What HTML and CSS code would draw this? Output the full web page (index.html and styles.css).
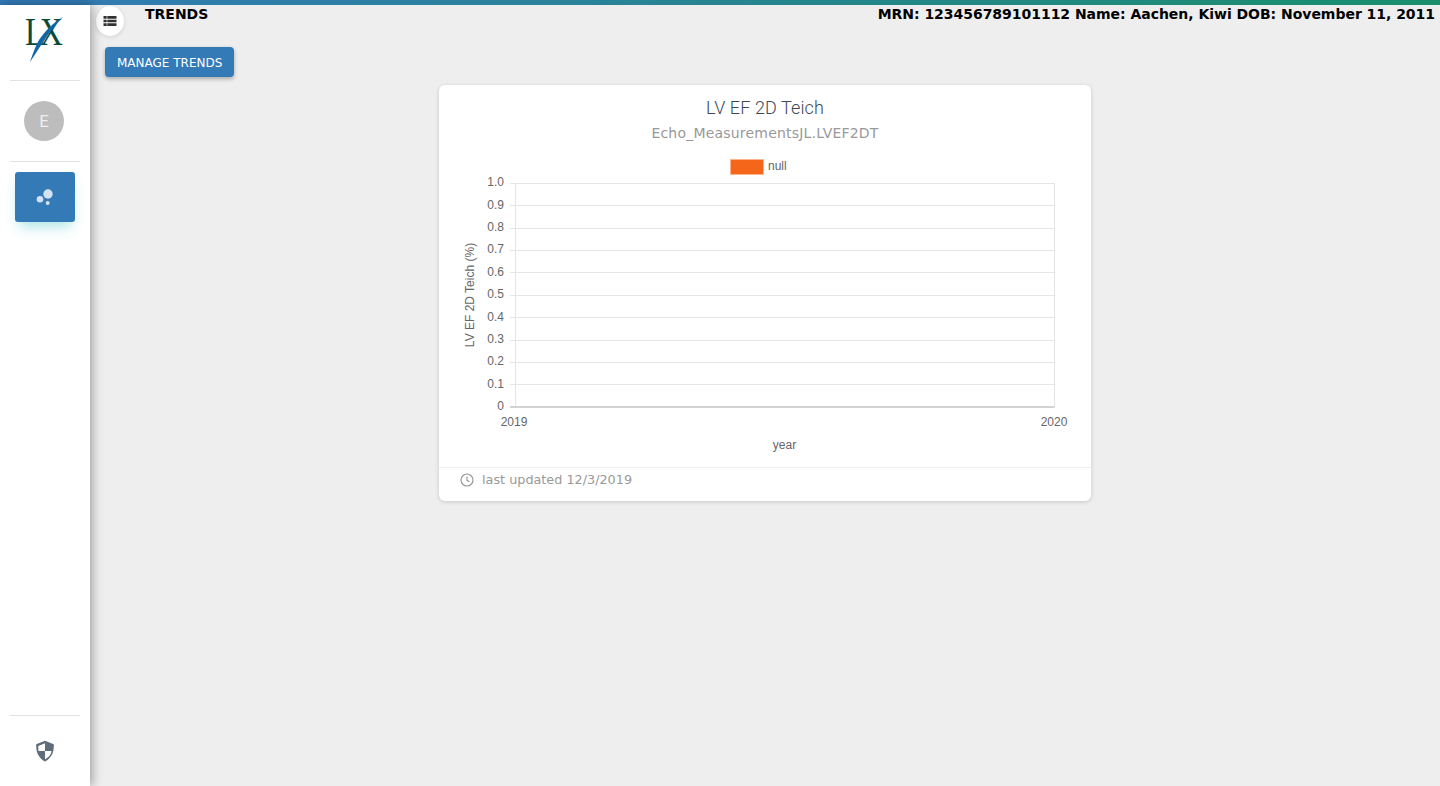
FILE: index.html
```html
<!DOCTYPE html>
<html lang="en">
<head>
    <meta charset="UTF-8">
    <meta name="viewport" content="width=device-width, initial-scale=1.0">
    <title>Trends</title>
    <link rel="stylesheet" href="styles.css">
</head>
<body>
    <div class="top-line"></div>
    <div class="wrapper">
        <aside class="sidebar">
            <div class="logo">
                <svg width="42" height="56" viewBox="0 -8 42 56">
                    <text class="logo-letters" transform="translate(1 29) scale(.8 1)">LX</text>
                    <path class="logo-swoosh" d="M39 1 C29 7 21 15 15 24 C11 31 8 40 6 46 C11 39 15.500 31 20.500 24 C25.500 16 32 8 39 1 Z"/>
                </svg>
            </div>
            <div class="side-section user">
                <div class="avatar">E</div>
            </div>
            <div class="side-section nav">
                <a class="nav-item" href="#">
                    <svg width="18" height="18" viewBox="0 0 18 18">
                        <circle cx="12" cy="6" r="4.700"/>
                        <circle cx="4" cy="11.300" r="3.300"/>
                        <circle cx="11.700" cy="15" r="2"/>
                    </svg>
                </a>
            </div>
            <div class="side-footer">
                <svg width="20" height="22" viewBox="0 0 20 22">
                    <path class="shield" d="M10 .8 L18.800 4.200 C19 11 17.500 17.500 10 21.500 C2.500 17.500 1 11 1.200 4.200 Z"/>
                    <path class="shield-light" d="M10 3.300 V11 H3.500 C3.400 9.500 3.300 7.800 3.300 5.900 Z"/>
                    <path class="shield-light" d="M10 11 H16.500 C16 14.500 14.200 17.200 10 19.200 Z"/>
                </svg>
            </div>
        </aside>

        <main class="main">
            <div class="header">
                <button class="toggle">
                    <svg width="14" height="12" viewBox="0 0 14 12">
                        <path d="M.5 1 H3.700 V3.700 H.5 Z M4.300 1 H13.500 V3.700 H4.300 Z M.5 4.700 H3.700 V7.300 H.5 Z M4.300 4.700 H13.500 V7.300 H4.300 Z M.5 8.300 H3.700 V11 H.5 Z M4.300 8.300 H13.500 V11 H4.300 Z"/>
                    </svg>
                </button>
                <div class="page-title">TRENDS</div>
                <div class="patient">MRN: 123456789101112 Name: Aachen, Kiwi DOB: November 11, 2011</div>
            </div>
            <div class="actions">
                <button class="btn">MANAGE TRENDS</button>
            </div>
            <div class="content">
                <div class="card">
                    <h4 class="card-title">LV EF 2D Teich</h4>
                    <p class="card-category">Echo_MeasurementsJL.LVEF2DT</p>
                    <svg class="chart" width="652" height="315" viewBox="0 0 652 315">
                        <rect class="legend-box" x="291.500" y="7.500" width="33" height="15"/>
                        <text class="chart-text" x="329" y="17.500">null</text>

                        <g class="grid">
                            <path d="M71 31.500 H615.500"/>
                            <path d="M71 53.500 H615.500"/>
                            <path d="M71 76.500 H615.500"/>
                            <path d="M71 98.500 H615.500"/>
                            <path d="M71 120.500 H615.500"/>
                            <path d="M71 143.500 H615.500"/>
                            <path d="M71 165.500 H615.500"/>
                            <path d="M71 188.500 H615.500"/>
                            <path d="M71 210.500 H615.500"/>
                            <path d="M71 232.500 H615.500"/>
                            <path d="M76.500 31 V255"/>
                            <path d="M615.500 31 V255"/>
                        </g>
                        <path class="zero-line" d="M71 255 H615.500"/>

                        <g class="chart-text y-ticks">
                            <text x="65" y="34">1.0</text>
                            <text x="65" y="57">0.9</text>
                            <text x="65" y="79">0.8</text>
                            <text x="65" y="101">0.7</text>
                            <text x="65" y="124">0.6</text>
                            <text x="65" y="146">0.5</text>
                            <text x="65" y="169">0.4</text>
                            <text x="65" y="191">0.3</text>
                            <text x="65" y="213">0.2</text>
                            <text x="65" y="236">0.1</text>
                            <text x="65" y="258">0</text>
                        </g>
                        <text class="chart-text x-tick" x="75" y="274">2019</text>
                        <text class="chart-text x-tick" x="615" y="274">2020</text>
                        <text class="chart-text x-tick" x="345.500" y="297">year</text>
                        <text class="chart-text x-tick" transform="translate(35 143) rotate(-90)">LV EF 2D Teich (%)</text>
                    </svg>
                    <div class="card-footer">
                        <svg width="14" height="14" viewBox="0 0 14 14">
                            <circle class="clock" cx="7" cy="7" r="6"/>
                            <path class="clock" d="M7 3.500 V7.300 L9.500 8.800"/>
                        </svg>
                        <span>last updated 12/3/2019</span>
                    </div>
                </div>
            </div>
        </main>
    </div>
</body>
</html>
```

FILE: styles.css
```css
html, body {
    height: 100%;
}
body {
    margin: 0;
    display: flex;
    flex-direction: column;
    overflow: hidden;
    font-family: "DejaVu Sans", sans-serif;
    background-color: #eeeeee;
}
.top-line {
    height: 5px;
    flex-shrink: 0;
    background: linear-gradient(to right, #337ab7, #1a8f6c);
}
.wrapper {
    flex: 1;
    display: flex;
    min-height: 0;
}

/* sidebar */
.sidebar {
    width: 90px;
    flex-shrink: 0;
    display: flex;
    flex-direction: column;
    background-color: #fff;
    box-shadow: 2px 0 10px rgba(0, 0, 0, 0.35);
    z-index: 2;
}
.logo {
    height: 76px;
    margin: 0 10px;
    display: flex;
    justify-content: center;
    padding-top: 3px;
    box-sizing: border-box;
    border-bottom: 1px solid #e2e2e2;
}
.logo-letters {
    font-family: "Liberation Serif", serif;
    font-size: 40px;
    letter-spacing: -6px;
    fill: #0b4a37;
}
.logo-swoosh {
    fill: #0f67a8;
}
.side-section {
    margin: 0 10px;
}
.user {
    height: 80px;
    display: flex;
    justify-content: center;
    align-items: center;
    border-bottom: 1px solid #e2e2e2;
}
.avatar {
    width: 40px;
    height: 40px;
    margin-right: 2px;
    border-radius: 50%;
    background-color: #bdbdbd;
    color: #eee;
    font-family: Roboto, sans-serif;
    font-size: 17px;
    line-height: 40px;
    text-align: center;
}
.nav {
    flex: 1;
    padding: 10px 5px 0;
}
.nav-item {
    height: 50px;
    display: flex;
    justify-content: center;
    align-items: center;
    border-radius: 3px;
    background-color: #337ab7;
    box-shadow: 0 8px 14px -4px rgba(60, 190, 200, 0.45);
}
.nav-item circle {
    fill: #d3e3f3;
}
.side-footer {
    height: 71px;
    margin: 0 10px;
    display: flex;
    justify-content: center;
    padding-top: 24px;
    box-sizing: border-box;
    border-top: 1px solid #e2e2e2;
}
.shield {
    fill: #5f6c7b;
}
.shield-light {
    fill: #fff;
}

/* main area */
.main {
    flex: 1;
    min-width: 0;
    display: flex;
    flex-direction: column;
}
.header {
    height: 32px;
    display: flex;
    align-items: flex-start;
    padding: 0 5px 0 6px;
    color: #000;
    font-size: 14px;
    font-weight: bold;
    line-height: 19px;
}
.toggle {
    width: 28px;
    height: 30px;
    margin-top: 1px;
    padding: 0;
    border: none;
    border-radius: 50%;
    background-color: #fff;
    box-shadow: 0 1px 4px rgba(0, 0, 0, 0.12);
    display: flex;
    justify-content: center;
    align-items: center;
}
.toggle path {
    fill: #333;
}
.page-title {
    margin-left: 21px;
}
.patient {
    margin-left: auto;
    letter-spacing: -0.03px;
}
.actions {
    height: 48px;
    padding: 10px 0 0 15px;
    box-sizing: border-box;
}
.btn {
    height: 30px;
    padding: 1px 12px 0;
    border: none;
    border-radius: 4px;
    background-color: #337ab7;
    color: #fff;
    font-family: "DejaVu Sans", sans-serif;
    font-size: 12px;
    box-shadow: 0 2px 4px rgba(0, 0, 0, 0.3);
}
.content {
    display: flex;
    justify-content: center;
}
.card {
    width: 652px;
    height: 416px;
    border-radius: 6px;
    background-color: #fff;
    box-shadow: 0 1px 4px rgba(0, 0, 0, 0.16);
    display: flex;
    flex-direction: column;
}
.card-title {
    margin: 12px 0 0;
    color: #3c4858;
    font-family: Roboto, sans-serif;
    font-size: 18px;
    font-weight: 300;
    letter-spacing: 0.1px;
    line-height: 22px;
    text-align: center;
}
.card-category {
    margin: 5px 0 0;
    color: #999;
    font-size: 14px;
    letter-spacing: 0.2px;
    line-height: 18px;
    text-align: center;
}
.chart {
    display: block;
    margin-top: 10px;
}
.legend-box {
    fill: #f5661b;
    stroke: #fbb48c;
    stroke-width: 1;
}
.chart-text {
    font-family: "Liberation Sans", sans-serif;
    font-size: 12px;
    fill: #666;
}
.y-ticks {
    text-anchor: end;
}
.x-tick {
    text-anchor: middle;
}
.grid path {
    stroke: #e5e5e5;
    stroke-width: 1;
    fill: none;
}
.zero-line {
    stroke: #c4c4c4;
    stroke-width: 1.500;
    fill: none;
}
.card-footer {
    flex: 1;
    padding: 0 21px 10px;
    display: flex;
    align-items: center;
    gap: 8px;
    border-top: 1px solid #eee;
    color: #999;
    font-size: 12.800px;
}
.clock {
    fill: none;
    stroke: #999;
    stroke-width: 1.200;
}
```
